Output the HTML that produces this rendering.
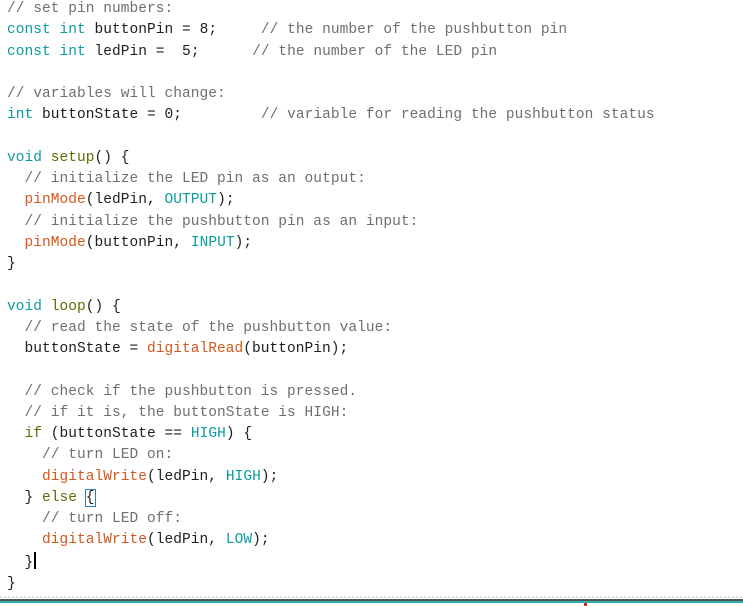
<!DOCTYPE html>
<html><head><meta charset="utf-8"><style>
html,body{margin:0;padding:0;background:#fff;width:743px;height:606px;overflow:hidden;position:relative}
pre{position:absolute;left:7px;top:-1px;margin:0;font-family:"Liberation Mono",monospace;font-size:14.5px;line-height:21.25px;color:#1e1e1e;letter-spacing:0.05px}
.c{color:#6f6f6f}.k{color:#0a9aa0}.f{color:#d4581c}.o{color:#5e6d03}
.br{outline:1.5px solid #2c7fb8;outline-offset:0}
.cur{display:inline-block;width:2px;height:17px;background:#000;vertical-align:-3px;margin-left:1px}
.l1{position:absolute;left:0;top:596px;width:743px;height:2px;background:repeating-linear-gradient(90deg,#e0e0e0 0 2px,#f6f6f6 2px 4px)}
.l2{position:absolute;left:0;top:599px;width:743px;height:2px;background:#4a5a5a}
.l3{position:absolute;left:0;top:601px;width:743px;height:2px;background:#3aa8b0}
.dot{position:absolute;left:584px;top:603px;width:3px;height:3px;background:#e02020}
</style></head><body>
<pre><span class="c">// set pin numbers:</span>
<span class="k">const</span> <span class="k">int</span> buttonPin = 8;     <span class="c">// the number of the pushbutton pin</span>
<span class="k">const</span> <span class="k">int</span> ledPin =  5;      <span class="c">// the number of the LED pin</span>

<span class="c">// variables will change:</span>
<span class="k">int</span> buttonState = 0;         <span class="c">// variable for reading the pushbutton status</span>

<span class="k">void</span> <span class="o">setup</span>() {
  <span class="c">// initialize the LED pin as an output:</span>
  <span class="f">pinMode</span>(ledPin, <span class="k">OUTPUT</span>);
  <span class="c">// initialize the pushbutton pin as an input:</span>
  <span class="f">pinMode</span>(buttonPin, <span class="k">INPUT</span>);
}

<span class="k">void</span> <span class="o">loop</span>() {
  <span class="c">// read the state of the pushbutton value:</span>
  buttonState = <span class="f">digitalRead</span>(buttonPin);

  <span class="c">// check if the pushbutton is pressed.</span>
  <span class="c">// if it is, the buttonState is HIGH:</span>
  <span class="o">if</span> (buttonState == <span class="k">HIGH</span>) {
    <span class="c">// turn LED on:</span>
    <span class="f">digitalWrite</span>(ledPin, <span class="k">HIGH</span>);
  } <span class="o">else</span> <span class="br">{</span>
    <span class="c">// turn LED off:</span>
    <span class="f">digitalWrite</span>(ledPin, <span class="k">LOW</span>);
  }<span class="cur"></span>
}</pre>
<div class="l1"></div><div class="l2"></div><div class="l3"></div><div class="dot"></div>
</body></html>
